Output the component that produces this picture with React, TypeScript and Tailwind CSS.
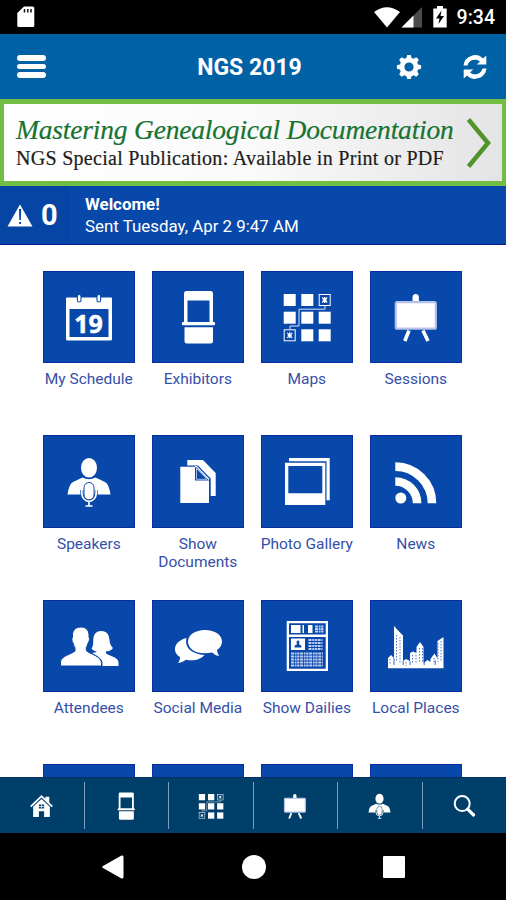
import type { ReactNode } from "react";

function Exhibitor() {
  return (
    <g>
      <path fillRule="evenodd" d="M34.5 20h24q2.500 0 2.500 2.500V52H32V22.500q0-2.500 2.500-2.500zM35.500 29.500V51h22V29.500z" />
      <rect x="30" y="51" width="33" height="3.300" rx=".8" />
      <path d="M32.500 56.200H61V70q0 2.500-2.500 2.500H35q-2.500 0-2.500-2.500z" />
    </g>
  );
}

function MapGrid() {
  const solid = [
    [22.7, 23], [40.3, 23], [22.7, 40.7], [40.3, 40.7], [57.7, 40.7], [40.3, 58.3], [57.7, 58.3],
  ];
  return (
    <g>
      {solid.map(([x, y]) => (
        <rect key={`${x}-${y}`} x={x} y={y} width="12" height="12" />
      ))}
      <path d="M64 35v3.200H38V55h-9v3" fill="none" stroke="#dbe4ff" strokeWidth="1" />
      {[[58.2, 23.500], [23.200, 58.800]].map(([x, y]) => (
        <g key={x} transform={`translate(${x} ${y})`} fill="none" stroke="#fff">
          <rect width="11" height="11" strokeWidth="1" />
          <path d="M3 3l5 5M8 3L3 8M5.500 2.500v6M3.500 5.500h4" strokeWidth="1.200" />
        </g>
      ))}
    </g>
  );
}

function Easel() {
  return (
    <g>
      <path d="M42.500 31v-4.500a3.200 3.500 0 016.400 0V31z" />
      <rect x="25.800" y="31.200" width="40" height="26.500" rx="1.500" stroke="#b5c3ea" strokeWidth="2.200" />
      <path d="M39 59.500L34.800 70M53 59.500L58 70" stroke="#fff" strokeWidth="3.600" />
    </g>
  );
}

function Speaker({ bg }: { bg: string }) {
  return (
    <g>
      <ellipse cx="46" cy="32.700" rx="8" ry="9.800" />
      <path d="M39.500 42.500Q46 46 52.500 42.500L62 47q4 2 5.500 12.500H24.500Q26 49 30 47z" />
      <rect x="41" y="47.500" width="10" height="17.500" rx="5" stroke={bg} strokeWidth="1" />
      <path d="M38.800 55v3.500a7.200 7.800 0 0014.400 0V55" fill="none" stroke={bg} strokeWidth="3" />
      <path d="M38.800 55v3.500a7.200 7.800 0 0014.400 0V55M46 66v4.500M42.500 71h7" fill="none" stroke="#fff" strokeWidth="1.700" />
    </g>
  );
}

const BLUE = "#0848aa";

const icons: Record<string, ReactNode> = {
  schedule: (
    <g>
      <path fillRule="evenodd" d="M24 26.500h44q1 0 1 1V68q0 1.500-1.500 1.500h-43Q23 69.500 23 68V27.500q0-1 1-1zM26.500 38v28h39V38z" />
      {[36.200, 55.800].map((x) => (
        <rect key={x} x={x - 1.800} y="23.500" width="3.600" height="7.500" rx="1.800" stroke={BLUE} strokeWidth="1.100" />
      ))}
      <text x="45.500" y="62" textAnchor="middle" fontSize="25" fontWeight="700" stroke="#fff" strokeWidth=".5" className="font-['Open_Sans',sans-serif]">19</text>
    </g>
  ),
  exhibitors: <Exhibitor />,
  maps: <MapGrid />,
  sessions: <Easel />,
  speakers: <Speaker bg={BLUE} />,
  documents: (
    <g>
      <path d="M35.300 25H51l12.700 13v23h-5V43.500L46 30.500H35.300z" />
      <path d="M28.300 31.700H43V45.500h14V68H28.300z" />
      <path d="M44.500 33.500v10.800H55z" fill="none" stroke="#a9bceb" strokeWidth="1" />
      <path d="M43 31.700h1.500L57 44.500" fill="none" stroke="#fff" strokeWidth="1.200" />
    </g>
  ),
  photos: (
    <g>
      <path d="M28 23h40.700v42.300h-3.200V26.300H28z" />
      <path fillRule="evenodd" d="M24 27.700h40.300V70H24zM27.300 31v27.300h34V31z" />
    </g>
  ),
  news: (
    <g>
      <circle cx="30.800" cy="63" r="5.500" />
      <path d="M25.300 46.500a21.800 21.800 0 0121.800 21.800M25.300 31.600A36.700 36.700 0 0162 68.300" fill="none" stroke="#fff" strokeWidth="8.600" />
    </g>
  ),
  attendees: (
    <g>
      <path d="M58 31c6.500 0 8 4 8.500 9 .3 4 1.500 6 3.500 8-1.500 2.500-4 3.300-7 3.300v2.200c4 2.500 12.500 4 12.500 9V66H59.500v-2.500c0-5-4.500-7-10.500-10.500 3-.5 4.500-.5 4.500-1.700-2.500 0-3.500-1-5-2.800 2.500-3 1.300-7 2-11 .7-3.500 2.800-6.500 7.500-6.500z" />
      <path d="M38 27c6 0 8.500 4.500 8 10 1.300 1.500 0 5-1.200 6.500-.3 2-1 3-1.500 4v3c3.500 4 15.200 5 15.200 13V66h-41v-4c0-6 11.500-8 14.500-11v-3.500c-1-1-1.500-2.500-1.500-4-1.500-1-2.200-5-1-6.500-.5-5.500 2-10 8.500-10z" stroke={BLUE} strokeWidth="1" />
    </g>
  ),
  social: (
    <g>
      <path d="M34.500 38c-14.500 4-13.500 15-6.500 19 0 2-.3 4-2 6 3.500-.3 6-1.800 8-3.300 6.500 1.500 14 .5 18.500-4.700C41.500 54 32 49 34.500 38z" />
      <path d="M53 30c10 0 17 5 17 11.500 0 4-2.200 6.500-5 8.500.3 2.500 1 4 2.200 6-3.200-.5-5.500-2-7.200-3.500C46.500 55.500 36 50 36 41.500 36 35 43 30 53 30z" />
    </g>
  ),
  dailies: (
    <g>
      <path fillRule="evenodd" d="M25.700 21H67v50H25.700zM28 23.300v11.200h36.700V23.300zM28 37v31.700h36.700V37z" />
      <path d="M30 25h9.500v8H30zM41.500 25H43v8h-1.500zM47 25h4.500v8H47zM30 38.500h14V50H30z" />
      <path d="M54 26.500h9M54 29h9M54 31.500h9M47.500 40h14M47.500 43h14M47.500 46h14M47.500 49h14M30 53.500h32M30 56.500h32M30 59.500h32M30 62.500h32M30 65.500h32" stroke="#c2d0f4" strokeWidth="1.800" strokeDasharray="3 .8 1.700 .6 2.300 .7" />
      <path d="M33.500 47.500q0-3 2.500-3-1.200-4 1-4t1 4q2.500 0 2.500 3z" fill={BLUE} />
    </g>
  ),
  places: (
    <g>
      <path d="M18 68.300V58l3-3 3 3V35l0-9 6 6.500 3 3V61l3-2 4 2V53l3-1.500 3.500 1.500v-6l3.500-5 3.500 5v16l4-3 3 2v-3l4-5.500 3 5V41l6-4v31.300z" />
      <path d="M26.500 35v27M30 37v26M42.500 55v8M46 55v8M49.500 48v14M52.500 48v14M64 58v6M68 43v19M71 41v21M20 59v6M36 62v4" stroke="#4f79c8" strokeWidth="1" strokeDasharray="1.500 1.500" />
      <path d="M24 58v7M33.200 61v4M40 61v4M54.200 62v3M65.200 60v5" stroke={BLUE} strokeWidth=".8" />
    </g>
  ),
};

const tiles: [string, string][] = [
  ["schedule", "My Schedule"],
  ["exhibitors", "Exhibitors"],
  ["maps", "Maps"],
  ["sessions", "Sessions"],
  ["speakers", "Speakers"],
  ["documents", "Show Documents"],
  ["photos", "Photo Gallery"],
  ["news", "News"],
  ["attendees", "Attendees"],
  ["social", "Social Media"],
  ["dailies", "Show Dailies"],
  ["places", "Local Places"],
  ["", ""], ["", ""], ["", ""], ["", ""],
];

function Tile({ icon, label }: { icon: string; label: string }) {
  return (
    <div className="flex h-[164.500px] w-[109px] flex-col items-center">
      <div className="size-[92.500px] shrink-0 border border-[#0b2da3] bg-[#0848aa]">
        <svg viewBox="1 1 90.500 90.500" className="block size-full" fill="#fff">
          {icons[icon]}
        </svg>
      </div>
      <div className="mt-[7px] w-[98px] text-center text-[15.500px] leading-[18px] text-[#3650a8]">{label}</div>
    </div>
  );
}

const tabs: ReactNode[] = [
  <svg viewBox="0 0 24 24" className="size-[25px]" fill="#fff">
    <path d="M1 12.500L12 2l3.700 3.400V3.500H19.500V9l3.500 3.500-1.200 1.200L12 4.400 2.200 13.700z" />
    <path fillRule="evenodd" d="M4 13.200l8-7.500 8 7.500V23h-5.500v-5.500h-5V23H4zM9.500 11v3.800h5V11z" />
    <path d="M12 11v4M9.500 13h5" stroke="#fff" strokeWidth=".7" />
  </svg>,
  <svg viewBox="0 0 92 92" className="size-[48px]" fill="#fff"><Exhibitor /></svg>,
  <svg viewBox="0 0 92 92" className="size-[48px]" fill="#fff"><MapGrid /></svg>,
  <svg viewBox="0 0 92 92" className="size-[48px]" fill="#fff"><Easel /></svg>,
  <svg viewBox="0 0 92 92" className="size-[47px]" fill="#fff"><Speaker bg="#003f69" /></svg>,
  <svg viewBox="0 0 24 24" className="size-[24px]" fill="none" stroke="#fff">
    <circle cx="10.200" cy="9.600" r="7.500" strokeWidth="2" />
    <path d="M15.600 15.200l6 5.800" strokeWidth="3.200" strokeLinecap="round" />
  </svg>,
];

export default function App() {
  return (
    <div className="flex h-[900px] w-[506px] flex-col overflow-hidden bg-white font-['Roboto',sans-serif]">
      <div className="flex h-[34px] shrink-0 items-center bg-black pl-[17px] pr-[11px] text-white">
        <svg viewBox="0 0 18 22" className="h-[22px] w-[18px]" fill="#fff">
          <path d="M7 .5h8.500Q17.300.5 17.300 2v17.500q0 1.500-1.500 1.500h-14Q.3 21 .3 19.500V7z" />
          <path d="M7.500 3v3.500M10.800 3v3.500M14 3v3.500" stroke="#111" strokeWidth="1.500" />
        </svg>
        <svg viewBox="0 0 26 21" className="ml-auto h-[21px] w-[26px]" fill="#fff">
          <path d="M0 5Q13-4.500 26 5L13 20.500z" />
        </svg>
        <svg viewBox="0 0 22 21" className="ml-[1px] h-[21px] w-[22px]">
          <path d="M.5 20.500L21 0v20.500z" fill="#4b4b4b" />
          <path d="M.5 20.500L12.500 8.500v12z" fill="#fff" />
        </svg>
        <svg viewBox="0 0 14 22" className="ml-[10px] h-[22px] w-[14px]">
          <path d="M4 0h6v2.500h3.700V21.500H.3V2.500H4z" fill="#fff" />
          <path d="M8.500 4.500L3 12.500h3.500L5.500 18 11 10H7.500z" fill="#000" />
        </svg>
        <span className="ml-[10px] mt-[2px] text-[19.500px] font-medium leading-none">9:34</span>
      </div>

      <header className="grid h-[65px] shrink-0 grid-cols-[1fr_auto_1fr] items-center bg-[#0161a5] pl-[17px] pr-[18px] text-white">
        <div className="flex flex-col gap-[2.500px]">
          {[0, 1, 2].map((n) => (
            <div key={n} className="h-[5.700px] w-[29px] rounded-full bg-white" />
          ))}
        </div>
        <h1 className="mr-[6px] mt-[2px] text-[23px] font-bold leading-none">NGS 2019</h1>
        <div className="flex items-center justify-end gap-[40px]">
          <svg viewBox="0 0 26 26" className="size-[26px]">
            <circle cx="13" cy="13" r="7" fill="none" stroke="#fff" strokeWidth="4.800" />
            {[0, 45, 90, 135, 180, 225, 270, 315].map((a) => (
              <path key={a} d="M10.300 4.500l.9-3.600h3.600l.9 3.600z" fill="#fff" transform={`rotate(${a} 13 13)`} />
            ))}
          </svg>
          <svg viewBox="0 0 26 26" className="size-[26px]" fill="#fff">
            <path d="M1.500 11.500A11.500 11.500 0 0121 4.500L24.300 1.500V10.500H14.800L18 7.500A7.700 7.700 0 005.500 11.500z" />
            <path d="M24.500 14.500A11.500 11.500 0 015 21.500L1.700 24.500V15.500H11.200L8 18.500A7.700 7.700 0 0020.500 14.500z" />
          </svg>
        </div>
      </header>

      <section className="flex h-[87px] shrink-0 items-center border-x-[4px] border-y-[5px] border-[#72bd43] bg-linear-to-r from-white via-[#fafafa] to-[#e4e4e6] pl-[12px] pr-[10px]">
        <div className="flex flex-col whitespace-nowrap font-['Liberation_Serif',serif]">
          <span className="text-[27.500px] italic leading-[32px] tracking-[-0.190px] text-[#167332] [-webkit-text-stroke:0.2px_#167332]">Mastering Genealogical Documentation</span>
          <span className="text-[20px] leading-[25px] tracking-[0.290px] text-[#1d1d1d] [-webkit-text-stroke:0.2px_#1d1d1d]">NGS Special Publication: Available in Print or PDF</span>
        </div>
        <svg viewBox="0 0 26 50" className="ml-auto h-[50px] w-[26px] shrink-0">
          <path d="M2.500 1.500L22 25 2.500 48.500" fill="none" stroke="#53942a" strokeWidth="4.500" />
        </svg>
      </section>

      <section className="flex h-[59px] shrink-0 border-b border-[#0b1d91] bg-[#0848aa] text-white">
        <div className="flex w-[70px] items-center bg-[#0745a4] pl-[7px]">
          <svg viewBox="0 0 26 23" className="h-[23px] w-[26px]">
            <path d="M13 .5L25.500 22.500H.5z" fill="#fff" />
            <path d="M12 5h2.200l-.3 11h-1.600zM12.200 18h1.800v2h-1.800z" fill="#0848aa" />
          </svg>
          <span className="ml-[8px] text-[29px] font-bold leading-none">0</span>
        </div>
        <div className="pl-[15px] pt-[6.500px] text-[16.900px] leading-[22.500px]">
          <p className="font-bold">Welcome!</p>
          <p>Sent Tuesday, Apr 2 9:47 AM</p>
        </div>
      </section>

      <main className="grid min-h-0 flex-1 grid-cols-[repeat(4,109px)] content-start overflow-hidden pl-[34.300px] pt-[25.500px]">
        {tiles.map(([icon, label], i) => (
          <Tile key={i} icon={icon} label={label} />
        ))}
      </main>

      <nav className="flex h-[56px] shrink-0 border-t border-[#072e68] bg-[#003f69] py-[4px]">
        {tabs.map((tab, i) => (
          <div key={i} className="flex flex-1 items-center justify-center border-r border-[#7d9ebb] last:border-r-0">
            {tab}
          </div>
        ))}
      </nav>

      <div className="flex h-[67px] shrink-0 items-center justify-between bg-black pl-[102px] pr-[101px]">
        <svg viewBox="0 0 22 24" className="h-[24px] w-[22px]" fill="#fff">
          <path d="M1 11L19.500.5Q21.500 0 21.500 2v20q0 2-2 1.500L1 13q-1.500-1 0-2z" />
        </svg>
        <div className="size-[24px] rounded-full bg-white" />
        <div className="size-[22px] rounded-[1px] bg-white" />
      </div>
    </div>
  );
}
